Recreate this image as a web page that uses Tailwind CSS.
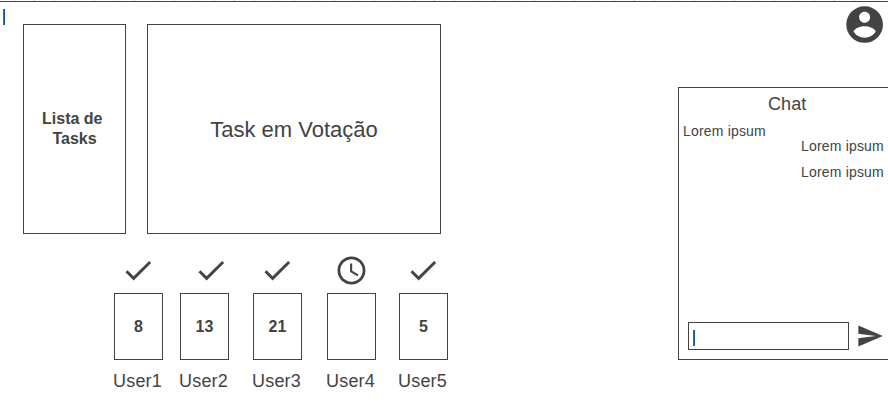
<!DOCTYPE html>
<html lang="pt">
<head>
<meta charset="utf-8">
<title>Planning</title>
<script src="https://cdn.jsdelivr.net/npm/@tailwindcss/browser@4"></script>
</head>
<body class="w-[888px] h-[406px] overflow-hidden bg-white text-[#434343] font-['Liberation_Sans',Arial,sans-serif]">
<svg class="hidden">
  <symbol id="check" viewBox="0 0 24 24"><path d="M9 16.2L4.8 12l-1.4 1.4L9 19 21 7l-1.4-1.4L9 16.2z"/></symbol>
</svg>
<div class="flex flex-col h-full">
  <div class="h-0.5 shrink-0 border-b border-[#434343]">
    <svg class="block w-full h-px" shape-rendering="crispEdges"><path d="M14 .5H888" stroke="#e2e2e2" stroke-dasharray="1 19"/><path d="M34 .5H888" stroke="#c8c8c8" stroke-dasharray="1 99"/></svg>
  </div>
  <div class="flex flex-1 min-h-0">
    <main class="w-[678px] shrink-0">
      <div class="flex items-start">
        <div class="mt-[7px] ml-[3px] mr-[18px] w-0.5 h-4 bg-[#0b55a5] border-l border-[#a1521e]"></div>
        <section class="mt-[22px] w-[103px] h-[210px] border border-[#434343] flex items-center justify-center font-bold text-base leading-5 text-center">
          <p>Lista de&nbsp;<br>Tasks</p>
        </section>
        <section class="mt-[22px] ml-[21px] w-[294px] h-[210px] border border-[#434343] flex items-center justify-center text-[22px]">Task em Votação</section>
      </div>
      <div class="flex pl-[114px] pt-[19px]">
        <div class="w-[49px] mr-[17px]">
          <svg class="block w-[35px] h-[35px] ml-1.5" viewBox="-.35 .2 24 24" fill="#434343"><use href="#check" width="24" height="24"/></svg>
          <div class="mt-[5px] h-[67px] border border-[#434343] flex items-center justify-center font-bold">8</div>
          <div class="mt-[7px] -ml-px text-lg tracking-[0.2px]">User1</div>
        </div>
        <div class="w-[49px] mr-6">
          <svg class="block w-[35px] h-[35px] ml-[13px]" viewBox="-.35 .2 24 24" fill="#434343"><use href="#check" width="24" height="24"/></svg>
          <div class="mt-[5px] h-[67px] border border-[#434343] flex items-center justify-center font-bold">13</div>
          <div class="mt-[7px] -ml-px text-lg tracking-[0.2px]">User2</div>
        </div>
        <div class="w-[49px] mr-[25px]">
          <svg class="block w-[35px] h-[35px] ml-1.5" viewBox="-.35 .2 24 24" fill="#434343"><use href="#check" width="24" height="24"/></svg>
          <div class="mt-[5px] h-[67px] border border-[#434343] flex items-center justify-center font-bold">21</div>
          <div class="mt-[7px] -ml-px text-lg tracking-[0.2px]">User3</div>
        </div>
        <div class="w-[49px] mr-[23px]">
          <svg class="block w-[35px] h-[35px] ml-[7px]" viewBox="-.5 -.5 25 25" fill="#434343"><path d="M11.99 2C6.47 2 2 6.48 2 12s4.47 10 9.99 10C17.52 22 22 17.52 22 12S17.52 2 11.99 2zM12 20c-4.42 0-8-3.58-8-8s3.58-8 8-8 8 3.58 8 8-3.58 8-8 8zm.5-13H11v6l5.25 3.15.75-1.23-4.5-2.67z"/></svg>
          <div class="mt-[5px] h-[67px] border border-[#434343]"></div>
          <div class="mt-[7px] -ml-px text-lg tracking-[0.2px]">User4</div>
        </div>
        <div class="w-[49px]">
          <svg class="block w-[35px] h-[35px] ml-1.5" viewBox="-.35 .2 24 24" fill="#434343"><use href="#check" width="24" height="24"/></svg>
          <div class="mt-[5px] h-[67px] border border-[#434343] flex items-center justify-center font-bold">5</div>
          <div class="mt-[7px] -ml-px text-lg tracking-[0.2px]">User5</div>
        </div>
      </div>
    </main>
    <aside class="w-[210px] shrink-0">
      <div class="h-[85px]">
        <svg class="block w-11 h-[45px] ml-[165px]" viewBox=".2 0 24 24" fill="#434343"><path d="M12 2C6.48 2 2 6.48 2 12s4.48 10 10 10 10-4.48 10-10S17.52 2 12 2zm0 3c1.66 0 3 1.34 3 3s-1.34 3-3 3-3-1.34-3-3 1.34-3 3-3zm0 14.2c-2.5 0-4.71-1.28-6-3.22.03-1.99 4-3.08 6-3.08 1.99 0 5.97 1.09 6 3.08-1.29 1.94-3.5 3.22-6 3.22z"/></svg>
      </div>
      <section class="h-[273px] border-y border-l border-[#434343] flex flex-col text-sm">
        <h1 class="mt-1 ml-[89px] text-lg leading-6 tracking-[0.1px]">Chat</h1>
        <p class="ml-1 mt-[5px] leading-5 tracking-[0.18px]">Lorem ipsum</p>
        <p class="ml-[122px] -mt-[5px] leading-5 tracking-[0.18px]">Lorem ipsum</p>
        <p class="ml-[122px] mt-1.5 leading-5 tracking-[0.18px]">Lorem ipsum</p>
        <div class="mt-auto mb-[9px] ml-[9px] flex items-center">
          <div class="w-[161px] h-7 border border-[#434343] pl-1 pt-[7px]"><div class="w-0.5 h-4 bg-[#0b55a5] border-l border-[#a1521e]"></div></div>
          <svg class="w-7 h-7 ml-[7px]" viewBox="0 0 24 24" fill="#434343"><path d="M2.01 21L23 12 2.01 3 2 10l15 2-15 2z"/></svg>
        </div>
      </section>
    </aside>
  </div>
</div>
</body>
</html>
